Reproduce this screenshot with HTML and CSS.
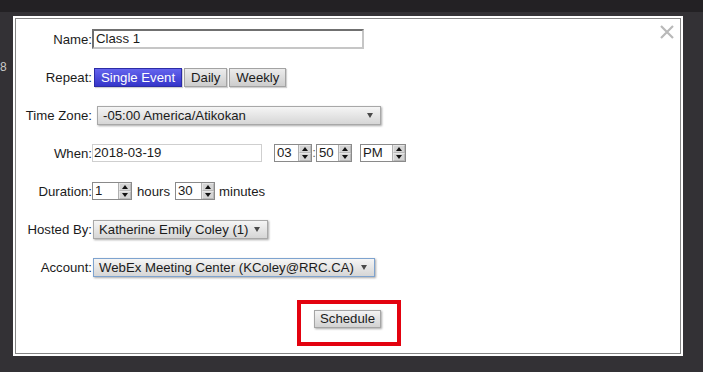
FILE: index.html
```html
<!DOCTYPE html>
<html>
<head>
<meta charset="utf-8">
<link rel="stylesheet" href="styles.css">
</head>
<body>
<div class="topbar"></div>
<span class="peek">8</span>
<div class="dialog">
  <div class="inner">
    <button class="close" aria-label="Close"><svg width="14" height="14" viewBox="0 0 14 14"><path d="M1 1L13 13M13 1L1 13" stroke="#b9b9b9" stroke-width="2.2" fill="none"/></svg></button>
    <div class="form">
      <div class="lbl">Name:</div>
      <div class="ctl"><div class="field name">Class 1</div></div>

      <div class="lbl">Repeat:</div>
      <div class="ctl"><div class="seg"><span class="sb on">Single Event</span><span class="sb">Daily</span><span class="sb">Weekly</span></div></div>

      <div class="lbl">Time Zone:</div>
      <div class="ctl"><div class="select tz"><span>-05:00 America/Atikokan</span><i class="caret"></i></div></div>

      <div class="lbl">When:</div>
      <div class="ctl when">
        <div class="field date">2018-03-19</div>
        <div class="spin hh"><span class="val">03</span><span class="arr"><i class="up"></i><i class="dn"></i></span></div>
        <span class="colon">:</span>
        <div class="spin mm"><span class="val">50</span><span class="arr"><i class="up"></i><i class="dn"></i></span></div>
        <div class="spin ap"><span class="val">PM</span><span class="arr"><i class="up"></i><i class="dn"></i></span></div>
      </div>

      <div class="lbl">Duration:</div>
      <div class="ctl dur">
        <div class="spin d1"><span class="val">1</span><span class="arr"><i class="up"></i><i class="dn"></i></span></div>
        <span class="unit">hours</span>
        <div class="spin d2"><span class="val">30</span><span class="arr"><i class="up"></i><i class="dn"></i></span></div>
        <span class="unit">minutes</span>
      </div>

      <div class="lbl">Hosted By:</div>
      <div class="ctl"><div class="select host"><span>Katherine Emily Coley (1)</span><i class="caret"></i></div></div>

      <div class="lbl">Account:</div>
      <div class="ctl"><div class="select acct"><span>WebEx Meeting Center (KColey@RRC.CA)</span><i class="caret"></i></div></div>
    </div>
    <div class="actions">
      <div class="highlight"><button class="btn">Schedule</button></div>
    </div>
  </div>
</div>
</body>
</html>
```
FILE: styles.css
```css
* { box-sizing: border-box; }
html, body { margin: 0; padding: 0; }
body {
  background: #333135;
  width: 703px;
  height: 372px;
  overflow: hidden;
  position: relative;
  font-family: "Liberation Sans", Arial, sans-serif;
  font-size: 13.2px;
  color: #1b1b1b;
}
.topbar {
  height: 12px;
  background: #232124;
}
.peek {
  position: absolute;
  left: 0;
  top: 60px;
  color: #c9c9c9;
  font-size: 12px;
}
.dialog {
  margin: 4px 0 0 13px;
  width: 670px;
  height: 340px;
  background: #fff;
  padding: 2px;
}
.inner {
  position: relative;
  height: 100%;
  border: 1px solid #858585;
  background: #fff;
}
.close {
  position: absolute;
  top: 6px;
  right: 6px;
  padding: 0;
  margin: 0;
  border: 0;
  background: none;
  width: 14px;
  height: 14px;
  display: block;
}
.close svg { display: block; }
.form {
  display: grid;
  grid-template-columns: 76px 1fr;
  grid-auto-rows: 38px;
  align-items: center;
  padding-top: 1px;
}
.lbl {
  text-align: right;
  white-space: nowrap;
}
.ctl {
  display: flex;
  align-items: center;
}
.field {
  background: #fff;
  line-height: 16px;
  white-space: nowrap;
}
.field.name {
  width: 272px;
  height: 20px;
  border-style: solid;
  border-width: 2px;
  border-color: #707070 #c6c6c6 #c6c6c6 #707070;
  padding-left: 2px;
}
.field.date {
  width: 170px;
  height: 18px;
  border: 1px solid #cfcfcf;
  padding-left: 1px;
  margin-right: 12px;
}
.seg {
  display: flex;
  gap: 2px;
  margin-left: 2px;
}
.sb {
  height: 19px;
  line-height: 17px;
  padding: 0 6px;
  border: 1px solid #a3a3a3;
  background: linear-gradient(#ececec, #cdcdcd);
  box-shadow: 1px 1px 1px rgba(0,0,0,0.18);
  color: #1b1b1b;
}
.sb.on {
  background: linear-gradient(#6464ee, #3535c9);
  border-color: #2c2ca6;
  color: #fff;
  padding: 0 6px 0 6px;
}
.select {
  display: flex;
  align-items: center;
  justify-content: space-between;
  height: 19px;
  border: 1px solid #a8a8a8;
  background: linear-gradient(#f5f5f5, #d6d6d6);
  box-shadow: 1px 1px 2px rgba(0,0,0,0.35);
  padding: 0 7px 0 5px;
  white-space: nowrap;
}
.select.tz { width: 284px; margin-left: 5px; }
.select.host { width: 175px; margin-left: 1px; }
.select.acct {
  width: 282px;
  margin-left: 1px;
  border-color: #7ea3cf;
}
.caret {
  width: 0;
  height: 0;
  border-left: 3px solid transparent;
  border-right: 3px solid transparent;
  border-top: 5px solid #4a4a4a;
}
.spin {
  display: flex;
  height: 18px;
  border: 1px solid #8a8a8a;
  background: #fff;
}
.spin .val {
  flex: 1;
  line-height: 16px;
  padding-left: 2px;
}
.spin .arr {
  width: 13px;
  display: flex;
  flex-direction: column;
  background: #d4d4d4;
  border-left: 1px solid #b0b0b0;
}
.spin .arr i {
  flex: 1;
  display: flex;
  align-items: center;
  justify-content: center;
  border: 1px solid #e6e6e6;
  border-right-color: #b8b8b8;
  border-bottom-color: #b8b8b8;
}
.spin .arr i::before {
  content: "";
  width: 0;
  height: 0;
  border-left: 3px solid transparent;
  border-right: 3px solid transparent;
}
.spin .arr .up::before { border-bottom: 4px solid #111; }
.spin .arr .dn::before { border-top: 4px solid #111; }
.spin.hh { width: 38px; }
.spin.mm { width: 36px; }
.spin.ap { width: 46px; margin-left: 8px; }
.spin.d1 { width: 40px; }
.spin.d2 { width: 40px; }
.colon {
  width: 4px;
  color: #666;
  text-align: center;
  line-height: 16px;
}
.unit { margin: 0 5px; }
.dur .unit:last-child { margin-right: 0; margin-left: 4px; }
.actions {
  display: flex;
  justify-content: center;
  margin-top: 14px;
}
.highlight {
  border: 4px solid #e3020f;
  padding: 6px 16px 14px 13px;
  margin-left: 2px;
}
.btn {
  display: block;
  width: 67px;
  height: 18px;
  padding: 0;
  margin: 0;
  font-family: "Liberation Sans", Arial, sans-serif;
  font-size: 13.2px;
  color: #1b1b1b;
  border: 1px solid #a5a5a5;
  background: linear-gradient(#f3f3f3, #d2d2d2);
  box-shadow: 1px 1px 2px rgba(0,0,0,0.35);
  line-height: 16px;
}
```
